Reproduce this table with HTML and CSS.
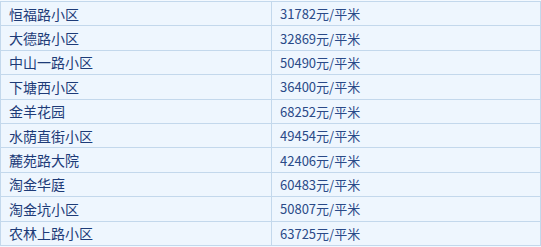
FILE: index.html
```html
<!DOCTYPE html>
<html lang="zh">
<head>
<meta charset="utf-8">
<link rel="stylesheet" href="styles.css">
</head>
<body>
<div class="price-table">
  <div class="cell name">恒福路小区</div><div class="cell price">31782元/平米</div>
  <div class="cell name">大德路小区</div><div class="cell price">32869元/平米</div>
  <div class="cell name">中山一路小区</div><div class="cell price">50490元/平米</div>
  <div class="cell name">下塘西小区</div><div class="cell price">36400元/平米</div>
  <div class="cell name">金羊花园</div><div class="cell price">68252元/平米</div>
  <div class="cell name">水荫直街小区</div><div class="cell price">49454元/平米</div>
  <div class="cell name">麓苑路大院</div><div class="cell price">42406元/平米</div>
  <div class="cell name">淘金华庭</div><div class="cell price">60483元/平米</div>
  <div class="cell name">淘金坑小区</div><div class="cell price">50807元/平米</div>
  <div class="cell name">农林上路小区</div><div class="cell price">63725元/平米</div>
</div>
</body>
</html>
```
FILE: styles.css
```css
html, body {
  margin: 0;
  padding: 0;
  background: #f3f9ff;
}
body {
  padding-top: 1px;
  font-family: "Noto Sans CJK SC", "Noto Sans", sans-serif;
  font-size: 14px;
  color: #1d3b78;
}
.price-table {
  width: 541px;
  box-sizing: border-box;
  display: grid;
  grid-template-columns: 271px 269px;
  grid-auto-rows: 24.4px;
  border-left: 1px solid #c3d8ec;
  border-top: 1px solid #c3d8ec;
  background: #eef6fe;
}
.cell {
  box-sizing: border-box;
  border-right: 1px solid #c3d8ec;
  border-bottom: 1px solid #c3d8ec;
  padding-left: 8px;
  display: flex;
  align-items: center;
  white-space: nowrap;
  line-height: 1;
}
.price {
  font-size: 13px;
  color: #2a4a88;
}
```
